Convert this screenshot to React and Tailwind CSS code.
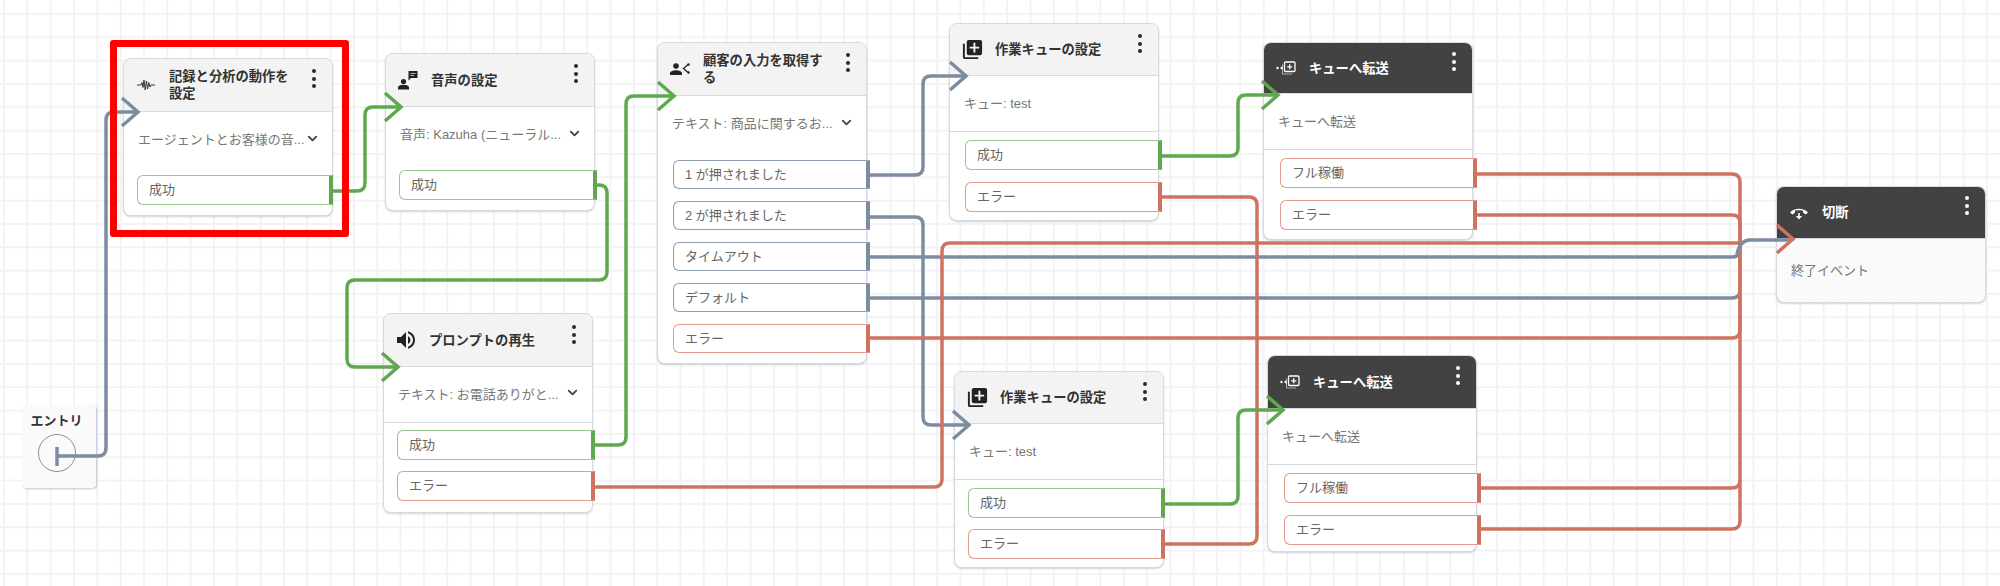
import { ChevronDown } from "lucide-react"
import { MdLibraryAdd, MdVolumeUp } from "react-icons/md"

const SLATE = "#7c8ca1"
const GREEN = "#5fa84f"
const CORAL = "#cf7360"

const WaveIcon = () => (
	<svg width="20" height="14" viewBox="0 0 20 14" fill="none" stroke="#222" strokeWidth="0.9">
		<path d="M1 7H5L6 4.5L7 9.5L8 2L9.2 12L10.4 3L11.6 11L12.8 4.5L14 9L15 7H19" />
	</svg>
)

const VoiceIcon = () => (
	<svg width="20" height="20" viewBox="0 0 20 20" fill="#222">
		<circle cx="5.5" cy="11.5" r="2.6" />
		<path d="M0 19.5V17.5C0 15.6 3 14.8 5.5 14.8C8 14.8 11 15.6 11 17.5V19.5Z" />
		<path d="M10.5 1H19.5V8H13L10.5 10.5Z" />
		<path d="M12.5 3.5H17.5M12.5 5.5H16" stroke="#f3f3f3" strokeWidth="0.7" />
	</svg>
)

const InputIcon = () => (
	<svg width="20" height="14" viewBox="0 0 20 14" fill="#222">
		<circle cx="6" cy="4" r="2.8" />
		<path d="M0 13V11.2C0 9.2 3.4 8.2 6 8.2C8.6 8.2 12 9.2 12 11.2V13Z" />
		<path d="M18 2.5L13.5 6.5L18 10.5" fill="none" stroke="#222" strokeWidth="1.3" />
		<circle cx="18.5" cy="2.5" r="1.2" />
		<circle cx="18.5" cy="10.5" r="1.2" />
	</svg>
)

const TransferIcon = () => (
	<svg width="20" height="14" viewBox="0 0 20 14" fill="none" stroke="#fff">
		<circle cx="1.5" cy="7" r="1.2" fill="#fff" stroke="none" />
		<path d="M6.5 5L4 7L6.5 9Z" fill="#fff" stroke="none" />
		<path d="M6.5 3.5V13H16" strokeWidth="0.8" opacity="0.7" />
		<rect x="8.5" y="1" width="10.5" height="9.5" rx="1" strokeWidth="1.3" />
		<path d="M13.7 3.2V8.3M11.2 5.8H16.3" strokeWidth="1.3" />
	</svg>
)

const HangupIcon = () => (
	<svg width="20" height="16" viewBox="0 0 20 16" fill="#fff">
		<path d="M1 7.5C5.5 2.5 14.5 2.5 19 7.5L16.5 9.5L14 7.5V5.8C11.5 5.2 8.5 5.2 6 5.8V7.5L3.5 9.5Z" />
		<path d="M9.2 8V11H6.8L10 14.5L13.2 11H10.8V8Z" />
	</svg>
)

const Dots = ({ dark, className }) => (
	<div className={`flex flex-col gap-[3.5px] ${className}`}>
		<span className={`size-[4px] rounded-full ${dark ? "bg-white" : "bg-[#2b2b2b]"}`} />
		<span className={`size-[4px] rounded-full ${dark ? "bg-white" : "bg-[#2b2b2b]"}`} />
		<span className={`size-[4px] rounded-full ${dark ? "bg-white" : "bg-[#2b2b2b]"}`} />
	</div>
)

const rowStyles = {
	ok: "border-[#97c98c] border-r-[#5fa84f]",
	err: "border-[#e29c8d] border-r-[#cf7360]",
	info: "border-[#8f9db0] border-r-[#7c8ca1]",
}

const nodes = [
	{
		pos: "left-[123px] top-[58px]",
		head: "h-[53px]",
		dots: "mt-[10px]",
		icon: <WaveIcon />,
		title: "記録と分析の動作を設定",
		desc: "エージェントとお客様の音...",
		chevron: true,
		list: "pt-[7px] pb-[10px] pl-[13px] gap-[11px] -mr-[1px]",
		rows: [{ label: "成功", kind: "ok" }],
	},
	{
		pos: "left-[385px] top-[53px]",
		head: "h-[53px]",
		dots: "mt-[10px]",
		icon: <VoiceIcon />,
		title: "音声の設定",
		desc: "音声: Kazuha (ニューラル...",
		chevron: true,
		list: "pt-[7px] pb-[10px] pl-[13px] gap-[11px] -mr-[3px]",
		rows: [{ label: "成功", kind: "ok" }],
	},
	{
		pos: "left-[383px] top-[313px]",
		head: "h-[53px]",
		dots: "mt-[11px]",
		icon: <MdVolumeUp size={24} color="#222" />,
		title: "プロンプトの再生",
		desc: "テキスト: お電話ありがと...",
		chevron: true,
		divider: true,
		list: "pt-[7px] pb-[11px] pl-[13px] gap-[11px] -mr-[3px]",
		rows: [
			{ label: "成功", kind: "ok" },
			{ label: "エラー", kind: "err" },
		],
	},
	{
		pos: "left-[657px] top-[42px]",
		head: "h-[53px]",
		dots: "mt-[10px]",
		icon: <InputIcon />,
		title: "顧客の入力を取得する",
		desc: "テキスト: 商品に関するお...",
		chevron: true,
		list: "pt-[8px] pb-[10px] pl-[15px] gap-[12px] -mr-[4px]",
		rowH: "h-[29px]",
		rows: [
			{ label: "1 が押されました", kind: "info" },
			{ label: "2 が押されました", kind: "info" },
			{ label: "タイムアウト", kind: "info" },
			{ label: "デフォルト", kind: "info" },
			{ label: "エラー", kind: "err" },
		],
	},
	{
		pos: "left-[949px] top-[23px]",
		head: "h-[52px]",
		dots: "mt-[10px]",
		icon: <MdLibraryAdd size={23} color="#222" />,
		title: "作業キューの設定",
		desc: "キュー: test",
		divider: true,
		list: "pt-[8px] pb-[8px] pl-[15px] gap-[12px] -mr-[4px]",
		rows: [
			{ label: "成功", kind: "ok" },
			{ label: "エラー", kind: "err" },
		],
	},
	{
		pos: "left-[954px] top-[371px]",
		head: "h-[52px]",
		dots: "mt-[10px]",
		icon: <MdLibraryAdd size={23} color="#222" />,
		title: "作業キューの設定",
		desc: "キュー: test",
		divider: true,
		list: "pt-[8px] pb-[8px] pl-[13px] gap-[11px] -mr-[2px]",
		rows: [
			{ label: "成功", kind: "ok" },
			{ label: "エラー", kind: "err" },
		],
	},
	{
		pos: "left-[1263px] top-[42px]",
		head: "h-[51px]",
		dots: "mt-[9px]",
		dark: true,
		icon: <TransferIcon />,
		title: "キューへ転送",
		desc: "キューへ転送",
		divider: true,
		list: "pt-[8px] pb-[9px] pl-[16px] gap-[12px] -mr-[5px]",
		rows: [
			{ label: "フル稼働", kind: "err" },
			{ label: "エラー", kind: "err" },
		],
	},
	{
		pos: "left-[1267px] top-[355px]",
		head: "h-[53px]",
		dots: "mt-[10px]",
		dark: true,
		icon: <TransferIcon />,
		title: "キューへ転送",
		desc: "キューへ転送",
		divider: true,
		list: "pt-[8px] pb-[6px] pl-[16px] gap-[12px] -mr-[5px]",
		rows: [
			{ label: "フル稼働", kind: "err" },
			{ label: "エラー", kind: "err" },
		],
	},
	{
		pos: "left-[1776px] top-[186px]",
		head: "h-[52px]",
		dots: "mt-[9px]",
		dark: true,
		soft: true,
		icon: <HangupIcon />,
		title: "切断",
		desc: "終了イベント",
		body: "h-[63px]",
		rows: [],
	},
]

const FlowNode = ({ pos, head, dots, dark, soft, icon, title, desc, chevron, divider, list, rowH, rows, body }) => (
	<div
		className={`absolute ${pos} w-[210px] rounded-[8px] border border-[#d6dae1] shadow-[0_1px_2px_rgba(120,130,150,0.35)] ${
			soft ? "bg-[#fafafa]" : "bg-white"
		}`}
	>
		<div
			className={`${head} flex rounded-t-[7px] border-b border-[#d6dae1] pl-[10px] ${
				dark ? "bg-[#424242] text-white" : "bg-[#f3f3f3] text-[#333]"
			}`}
		>
			<div className="flex w-6 shrink-0 items-center justify-center">{icon}</div>
			<div className="ml-[11px] flex w-[126px] items-center text-[13.3px] leading-[17px] font-bold">{title}</div>
			<Dots dark={dark} className={`ml-auto mr-[16px] ${dots}`} />
		</div>
		<div
			className={`${body || "h-[56px]"} flex items-center pl-[14px] text-[13px] text-[#777] ${
				divider ? "border-b border-[#d6dae1]" : ""
			}`}
		>
			<span className="block w-[168px] whitespace-nowrap">{desc}</span>
			{chevron && <ChevronDown size={15} strokeWidth={3} className="-mt-1 -ml-[1px] text-[#444]" />}
		</div>
		{rows.length > 0 && (
			<div className={`flex flex-col ${list}`}>
				{rows.map((row) => (
					<div
						key={row.label}
						className={`${rowH || "h-[30px]"} flex items-center rounded-l-[6px] border border-r-4 bg-white pl-[11px] text-[13px] text-[#666] ${
							rowStyles[row.kind]
						}`}
					>
						{row.label}
					</div>
				))}
			</div>
		)}
	</div>
)

const chevron = (x, y) => `M${x - 16} ${y - 14}L${x} ${y}L${x - 16} ${y + 14}`

// wires are ordered so the overlaps come out the way they do on the canvas
const wires = [
	{ color: SLATE, d: "M57 456H98Q106 456 106 448V120Q106 112 114 112H137" },
	{ color: SLATE, d: chevron(138, 112) },
	{ color: GREEN, d: "M333 191H357Q365 191 365 183V115Q365 107 373 107H400" },
	{ color: GREEN, d: chevron(401, 107) },
	{ color: GREEN, d: "M595 185H599Q607 185 607 193V272Q607 280 599 280H355Q347 280 347 288V359Q347 367 355 367H397" },
	{ color: GREEN, d: chevron(398, 367) },
	{ color: GREEN, d: "M593 445H618Q626 445 626 437V104Q626 96 634 96H673" },
	{ color: GREEN, d: chevron(674, 96) },
	{ color: SLATE, d: "M870 175H915Q923 175 923 167V84Q923 76 931 76H965" },
	{ color: SLATE, d: chevron(966, 76) },
	{ color: SLATE, d: "M870 217H915Q923 217 923 225V417Q923 425 931 425H968" },
	{ color: SLATE, d: chevron(969, 425) },
	{ color: SLATE, d: "M870 257H1732Q1740 257 1740 249" },
	{ color: SLATE, d: "M870 298H1732Q1740 298 1740 290" },
	{ color: CORAL, d: "M593 487H934Q942 487 942 479V251Q942 243 950 243H1740" },
	{ color: CORAL, d: "M870 338H1732Q1740 338 1740 330V240" },
	{ color: CORAL, d: "M1162 197H1249Q1257 197 1257 205V536Q1257 544 1249 544H1164" },
	{ color: CORAL, d: "M1476 174H1732Q1740 174 1740 182V240" },
	{ color: CORAL, d: "M1476 215H1732Q1740 215 1740 223V240" },
	{ color: CORAL, d: "M1480 488H1732Q1740 488 1740 480V240" },
	{ color: CORAL, d: "M1480 529H1732Q1740 529 1740 521V480" },
	{ color: GREEN, d: "M1162 156H1230Q1238 156 1238 148V103Q1238 95 1246 95H1277" },
	{ color: GREEN, d: chevron(1278, 95) },
	{ color: GREEN, d: "M1165 504H1230Q1238 504 1238 496V418Q1238 410 1246 410H1282" },
	{ color: GREEN, d: chevron(1283, 410) },
	{ color: SLATE, d: "M1737 254Q1740 240 1750 240H1792" },
	{ color: CORAL, d: chevron(1793, 239) },
]

const App = () => {
	return (
		<div className="relative h-[586px] w-[2000px] overflow-hidden bg-white bg-[linear-gradient(to_right,#f3f3f5_2px,transparent_2px),linear-gradient(to_bottom,#f3f3f5_2px,transparent_2px)] bg-[size:23.33px_23.33px] bg-[position:3px_13px] font-['Liberation_Sans','Noto_Sans_CJK_JP',sans-serif]">
			<div className="absolute top-[405px] left-[22px] flex h-[83px] w-[74px] flex-col items-center rounded-[4px] bg-[#fafafa] pt-[6px] pr-[5px] shadow-[1px_1px_2px_rgba(120,130,150,0.45)]">
				<span className="text-[13px] leading-[20px] font-bold text-[#333]">エントリ</span>
				<div className="mt-[3px] size-[38px] rounded-full border-[1.5px] border-[#8493a8]" />
			</div>

			{nodes.map((node) => (
				<FlowNode key={node.pos} {...node} />
			))}

			<svg className="pointer-events-none absolute inset-0" width="2000" height="586" fill="none">
				<path d="M57 447V466" stroke={SLATE} strokeWidth="3.5" />
				{wires.map((wire) => (
					<path key={wire.d} d={wire.d} stroke={wire.color} strokeWidth="3.5" />
				))}
			</svg>

			<div className="absolute top-[40px] left-[110px] h-[197px] w-[239px] rounded-[3px] border-[7px] border-[#ff0000]" />
		</div>
	)
}

export default App
